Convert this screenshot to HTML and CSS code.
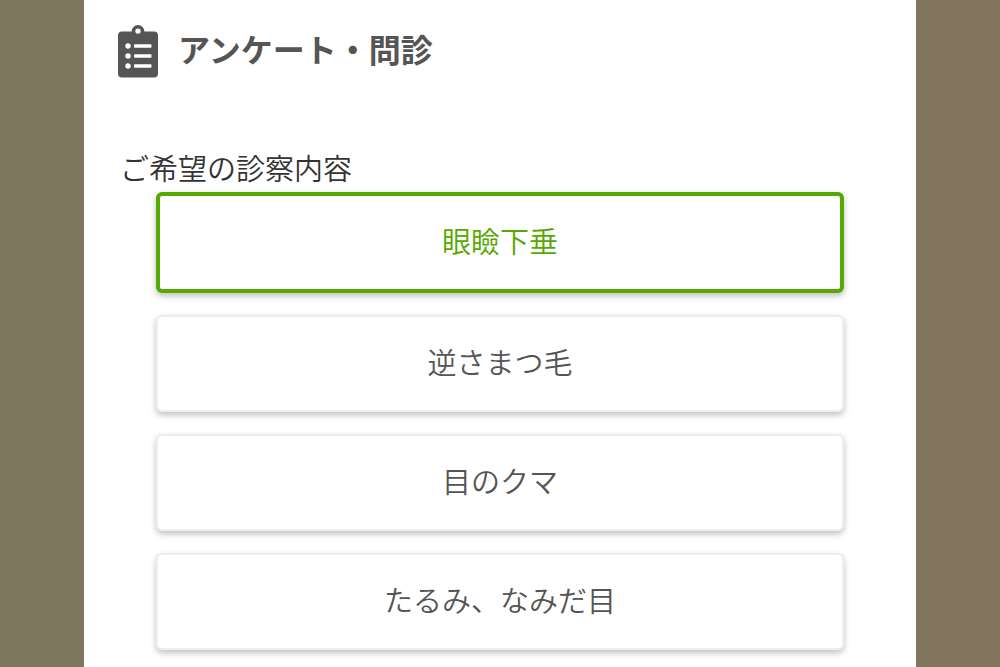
FILE: index.html
```html
<!DOCTYPE html>
<html lang="ja">
<head>
    <meta charset="UTF-8">
    <meta name="viewport" content="width=device-width, initial-scale=1.0">
    <title>アンケート・問診</title>
    <link rel="stylesheet" href="styles.css">
</head>
<body>
    <main class="page">
        <header class="header">
            <svg class="header-icon" viewBox="0 0 40 53" aria-hidden="true">
                <path fill="#555" fill-rule="evenodd" d="M4 7h9.600a6.400 6.400 0 0 1 12.800 0H36a4 4 0 0 1 4 4v38a4 4 0 0 1-4 4H4a4 4 0 0 1-4-4V11a4 4 0 0 1 4-4zM20 3.900a2.700 2.700 0 1 0 0 5.400a2.700 2.700 0 0 0 0-5.400z"/>
                <g fill="#fff">
                    <circle cx="10" cy="21.500" r="2.700"/>
                    <circle cx="10" cy="31.500" r="2.700"/>
                    <circle cx="10" cy="41.500" r="2.700"/>
                    <rect x="16" y="19.800" width="17.500" height="3.400" rx="0.800"/>
                    <rect x="16" y="29.800" width="17.500" height="3.400" rx="0.800"/>
                    <rect x="16" y="39.800" width="17.500" height="3.400" rx="0.800"/>
                </g>
            </svg>
            <h1 class="title">アンケート・問診</h1>
        </header>

        <section class="question">
            <h2 class="question-title" id="question">ご希望の診察内容</h2>
            <div class="options" role="group" aria-labelledby="question">
                <button type="button" class="option selected" aria-pressed="true">眼瞼下垂</button>
                <button type="button" class="option" aria-pressed="false">逆さまつ毛</button>
                <button type="button" class="option" aria-pressed="false">目のクマ</button>
                <button type="button" class="option" aria-pressed="false">たるみ、なみだ目</button>
            </div>
        </section>
    </main>
</body>
</html>
```

FILE: styles.css
```css
* {
    box-sizing: border-box;
}
body {
    margin: 0;
    padding: 0 84px;
    background: linear-gradient(to right, #7f785f 50%, #82765e 50%);
    font-family: "Noto Sans CJK JP", sans-serif;
    color: #333;
}
.page {
    min-height: 100vh;
    padding: 24px 34px 16px;
    background-color: #fff;
}
.header {
    display: flex;
    align-items: flex-start;
    gap: 20px;
}
.header-icon {
    width: 40px;
    height: 54px;
}
.title {
    margin: 0;
    font-size: 32px;
    line-height: 48px;
    font-weight: 700;
    color: #555;
}
.question {
    margin-top: 68px;
}
.question-title {
    margin: 0;
    padding: 0 2px 4px;
    font-size: 29px;
    line-height: 42px;
    font-weight: 350;
}
.options {
    display: flex;
    flex-direction: column;
    gap: 22px;
    padding: 0 38px;
}
.option {
    padding: 22px 16px 26px;
    border: 2px solid #eee;
    border-radius: 6px;
    background-color: #fff;
    box-shadow: 0 3px 6px rgba(0, 0, 0, 0.25);
    font-family: inherit;
    font-size: 29px;
    line-height: 45px;
    font-weight: 350;
    color: #555;
    cursor: pointer;
}
.option.selected {
    border: 4px solid #55a900;
    color: #55a900;
}
```
